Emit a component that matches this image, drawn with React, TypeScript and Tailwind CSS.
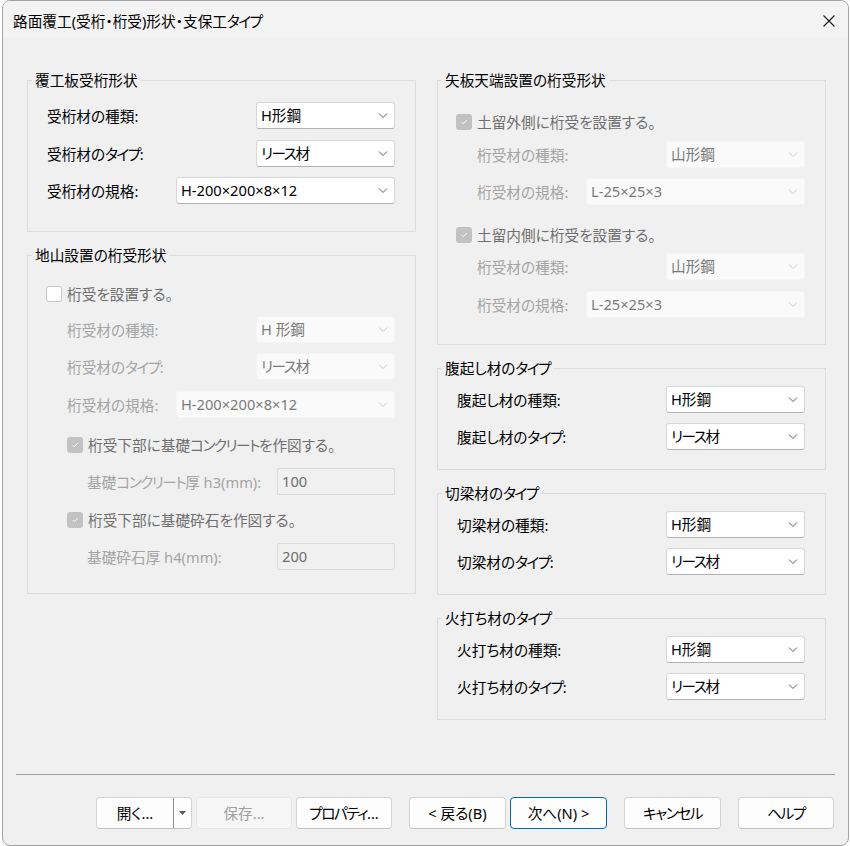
import React from "react";

type Kids = { children?: React.ReactNode; className?: string };

// Tightens katakana runs a little more than the proportional feature does on its own.
function J({ t }: { t: string }) {
  const parts = t.match(/[\u30A1-\u30FA\u30FC]+|[^\u30A1-\u30FA\u30FC]+/g) ?? [];
  return (
    <>
      {parts.map((p, i) => {
        const c = p.charCodeAt(0);
        if (c >= 0x30a1 && c <= 0x30fc && c !== 0x30fb)
          return (
            <span key={i} className="tracking-[-1.5px]">
              {p}
            </span>
          );
        return <span key={i}>{p}</span>;
      })}
    </>
  );
}

function Chevron({ disabled }: { disabled?: boolean }) {
  return (
    <svg width="10" height="6" viewBox="0 0 10 6" className="shrink-0">
      <path
        d="M1 0.5 L5 4.5 L9 0.5"
        fill="none"
        stroke={disabled ? "#c9c9c9" : "#5c5c5c"}
        strokeWidth="1"
      />
    </svg>
  );
}

function Combo({ value, wide, disabled }: { value: string; wide?: boolean; disabled?: boolean }) {
  const w = wide ? "w-[219px]" : "w-[139px]";
  const skin = disabled
    ? "bg-[#fafafa] border-[#f5f5f5] text-[#7a7a7a]"
    : "bg-white border-[#d6d6d6] border-b-[#b3b3b3] text-black";
  return (
    <div className={`${w} h-[27px] flex items-center justify-between pl-[4px] pr-[6px] border rounded-[3px] ${skin}`}>
      <span className="leading-none">
        <J t={value} />
      </span>
      <Chevron disabled={disabled} />
    </div>
  );
}

function TextBox({ value }: { value: string }) {
  return (
    <div className="w-[118px] h-[27px] flex items-center pl-[4px] border border-[#dadada] rounded-[2px] bg-[#f0f0f0] text-[#6e6e6e]">
      <span className="leading-none">{value}</span>
    </div>
  );
}

function Row({ label, disabled, className, children }: Kids & { label: string; disabled?: boolean }) {
  return (
    <div className={`flex items-center justify-between h-[27px] ${className ?? ""}`}>
      <span className={disabled ? "text-[#a4a4a4]" : "text-black"}>
        <J t={label} />
      </span>
      {children}
    </div>
  );
}

function Check({ checked }: { checked?: boolean }) {
  if (checked) {
    return (
      <span className="w-[16px] h-[16px] rounded-[3px] bg-[#c2c2c2] flex items-center justify-center shrink-0">
        <svg width="10" height="8" viewBox="0 0 10 8">
          <path d="M2.5 4 L4.2 5.7 L7.8 2.2" fill="none" stroke="#ffffff" strokeWidth="1" />
        </svg>
      </span>
    );
  }
  return <span className="w-[16px] h-[16px] rounded-[3px] bg-white border border-[#c6c6c6] shrink-0" />;
}

function CheckRow({ label, checked, className }: { label: string; checked?: boolean; className?: string }) {
  return (
    <div className={`flex items-center gap-[5px] h-[20px] ${className ?? ""}`}>
      <Check checked={checked} />
      <span className="text-[#6f6f6f]">
        <J t={label} />
      </span>
    </div>
  );
}

function Group({ title, className, children }: Kids & { title: string }) {
  return (
    <fieldset className="border border-[#dcdcdc]">
      <legend className="ml-[4px] px-[3px] leading-[20px] text-black">
        <J t={title} />
      </legend>
      <div className={className}>{children}</div>
    </fieldset>
  );
}

function Btn({ label, className, w }: { label: string; className?: string; w?: string }) {
  return (
    <div
      className={`${w ?? "w-[97px]"} h-[32px] flex items-center justify-center rounded-[4px] border ${
        className ?? "bg-[#fdfdfd] border-[#d3d3d3] border-b-[#c2c2c2] text-black"
      }`}
    >
      <span>
        <J t={label} />
      </span>
    </div>
  );
}

export default function App() {
  return (
    <div className="w-[850px] h-[846px] bg-white font-['Noto_Sans','Noto_Sans_CJK_JP',sans-serif] text-[14.67px] [font-feature-settings:'palt']">
      <div className="ml-[2px] w-[847px] h-[846px] flex flex-col border border-[#a3a3a3] rounded-[8px] bg-[#f0f0f0] overflow-hidden">
        {/* title bar */}
        <div className="h-[37px] pt-[3px] pl-[10px] pr-[13px] flex items-center justify-between bg-[#f3f3f3]">
          <span className="text-black">
            <J t="路面覆工(受桁・桁受)形状・支保工タイプ" />
          </span>
          <svg width="12" height="12" viewBox="0 0 12 12">
            <path d="M0.5 0.5 L11.5 11.5 M11.5 0.5 L0.5 11.5" stroke="#1a1a1a" strokeWidth="1.1" />
          </svg>
        </div>

        {/* groups */}
        <div className="flex gap-[21px] pl-[24px] pt-[32px]">
          <div className="w-[389px] flex flex-col gap-[13px]">
            <Group title="覆工板受桁形状" className="pl-[19px] pr-[20px] pt-[12px] pb-[27px]">
              <Row label="受桁材の種類:">
                <Combo value="H形鋼" />
              </Row>
              <Row label="受桁材のタイプ:" className="mt-[11px]">
                <Combo value="リース材" />
              </Row>
              <Row label="受桁材の規格:" className="mt-[10px]">
                <Combo value="H-200×200×8×12" wide />
              </Row>
            </Group>

            <Group title="地山設置の桁受形状" className="pl-[18px] pr-[20px] pt-[19px] pb-[23px]">
              <CheckRow label="桁受を設置する。" />
              <div className="pl-[21px]">
                <Row label="桁受材の種類:" disabled className="mt-[12px]">
                  <Combo value="H 形鋼" disabled />
                </Row>
                <Row label="桁受材のタイプ:" disabled className="mt-[10px]">
                  <Combo value="リース材" disabled />
                </Row>
                <Row label="桁受材の規格:" disabled className="mt-[11px]">
                  <Combo value="H-200×200×8×12" wide disabled />
                </Row>
                <CheckRow label="桁受下部に基礎コンクリートを作図する。" checked className="mt-[17px]" />
                <div className="pl-[20px]">
                  <Row label="基礎コンクリート厚 h3(mm):" disabled className="mt-[13px]">
                    <TextBox value="100" />
                  </Row>
                </div>
                <CheckRow label="桁受下部に基礎砕石を作図する。" checked className="mt-[15px]" />
                <div className="pl-[20px]">
                  <Row label="基礎砕石厚 h4(mm):" disabled className="mt-[13px]">
                    <TextBox value="200" />
                  </Row>
                </div>
              </div>
            </Group>
          </div>

          <div className="w-[389px] flex flex-col gap-[13px]">
            <Group title="矢板天端設置の桁受形状" className="pl-[18px] pr-[20px] pt-[22px] pb-[26px]">
              <CheckRow label="土留外側に桁受を設置する。" checked />
              <div className="pl-[21px]">
                <Row label="桁受材の種類:" disabled className="mt-[9px]">
                  <Combo value="山形鋼" disabled />
                </Row>
                <Row label="桁受材の規格:" disabled className="mt-[10px]">
                  <Combo value="L-25×25×3" wide disabled />
                </Row>
              </div>
              <CheckRow label="土留内側に桁受を設置する。" checked className="mt-[20px]" />
              <div className="pl-[21px]">
                <Row label="桁受材の種類:" disabled className="mt-[8px]">
                  <Combo value="山形鋼" disabled />
                </Row>
                <Row label="桁受材の規格:" disabled className="mt-[11px]">
                  <Combo value="L-25×25×3" wide disabled />
                </Row>
              </div>
            </Group>

            <Group title="腹起し材のタイプ" className="pl-[19px] pr-[20px] pt-[8px] pb-[19px]">
              <Row label="腹起し材の種類:">
                <Combo value="H形鋼" />
              </Row>
              <Row label="腹起し材のタイプ:" className="mt-[10px]">
                <Combo value="リース材" />
              </Row>
            </Group>

            <Group title="切梁材のタイプ" className="pl-[19px] pr-[20px] pt-[8px] pb-[19px]">
              <Row label="切梁材の種類:">
                <Combo value="H形鋼" />
              </Row>
              <Row label="切梁材のタイプ:" className="mt-[10px]">
                <Combo value="リース材" />
              </Row>
            </Group>

            <Group title="火打ち材のタイプ" className="pl-[19px] pr-[20px] pt-[8px] pb-[19px]">
              <Row label="火打ち材の種類:">
                <Combo value="H形鋼" />
              </Row>
              <Row label="火打ち材のタイプ:" className="mt-[10px]">
                <Combo value="リース材" />
              </Row>
            </Group>
          </div>
        </div>

        {/* footer */}
        <div className="mt-auto pb-[16px]">
          <div className="mx-[13px] h-px bg-[#a0a0a0]" />
          <div className="mt-[22px] pr-[14px] flex justify-end items-center">
            <div className="w-[96px] h-[32px] flex rounded-[4px] border bg-[#fdfdfd] border-[#d3d3d3] border-b-[#c2c2c2] text-black">
              <div className="w-[76px] flex items-center justify-center">
                <span>開く...</span>
              </div>
              <div className="w-px bg-[#8f8f8f]" />
              <div className="flex-1 flex items-center justify-center">
                <svg width="7" height="4" viewBox="0 0 7 4">
                  <path d="M0 0 L7 0 L3.5 4 Z" fill="#5a5a5a" />
                </svg>
              </div>
            </div>
            <Btn label="保存..." w="w-[96px] ml-[4px]" className="bg-[#f6f6f6] border-[#e6e6e6] text-[#a0a0a0]" />
            <Btn label="プロパティ..." w="w-[96px] ml-[4px]" />
            <Btn label="< 戻る(B)" w="w-[97px] ml-[17px]" />
            <Btn label="次へ(N) >" w="w-[97px] ml-[4px]" className="bg-[#fdfdfd] border-[#0067c0] text-black" />
            <Btn label="キャンセル" w="w-[97px] ml-[17px]" />
            <Btn label="ヘルプ" w="w-[96px] ml-[17px]" />
          </div>
        </div>
      </div>
    </div>
  );
}
